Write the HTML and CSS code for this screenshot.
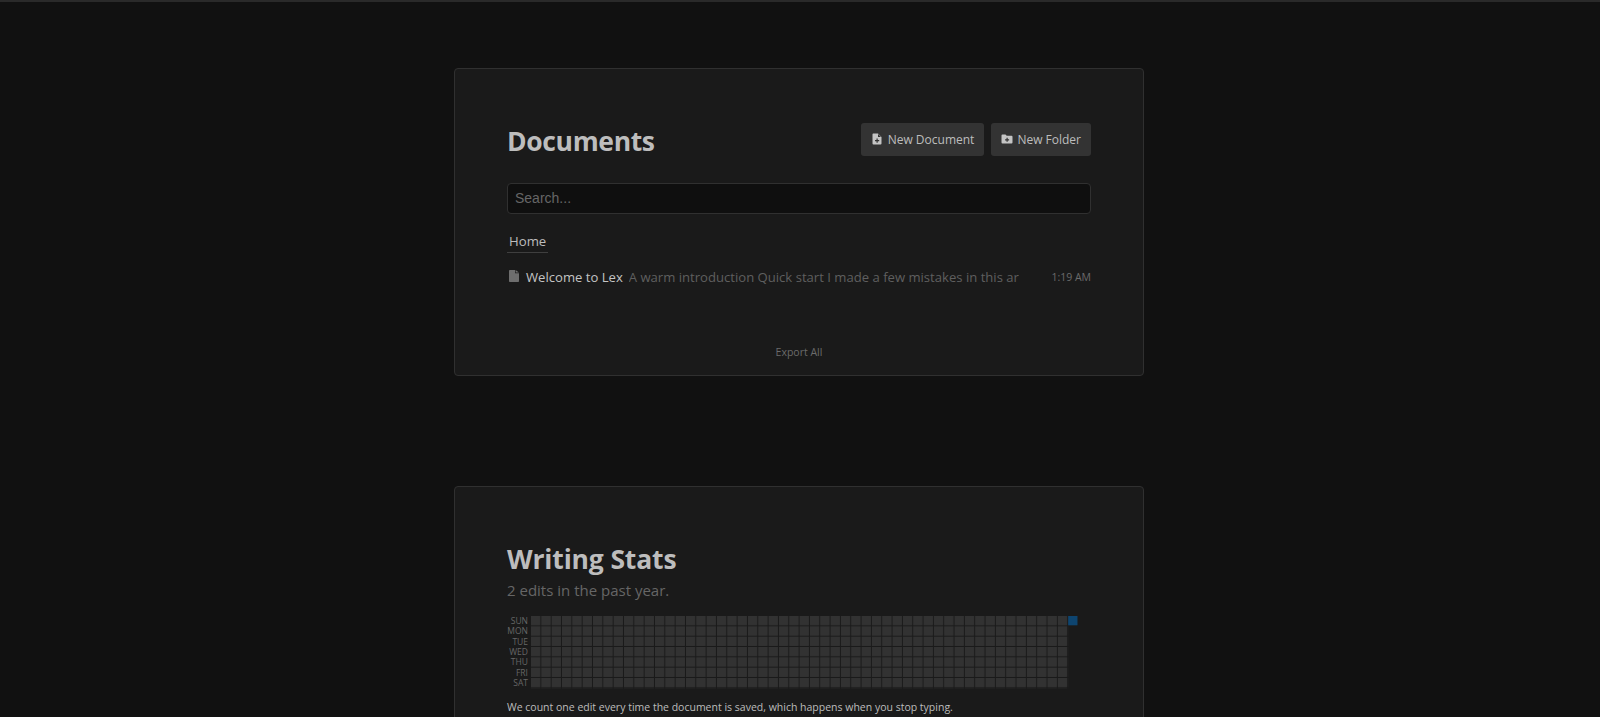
FILE: index.html
```html
<!DOCTYPE html>
<html lang="en">
<head>
<meta charset="utf-8">
<title>Lex</title>
<link rel="stylesheet" href="styles.css">
</head>
<body>
<div class="topline"></div>
<main class="page">
  <section class="card docs">
    <header class="docs-head">
      <h1 class="title title-docs">Documents</h1>
      <div class="actions">
        <button class="btn">
          <svg class="btn-icon" viewBox="0 0 12 12" width="12" height="12"><path fill="#c4c4c4" fill-rule="evenodd" d="M2 .5h5L10.500 4v6.500a1 1 0 0 1-1 1h-7a1 1 0 0 1-1-1v-9a1 1 0 0 1 .5-1zM7 1v3h3zM5.500 5.500v1.500H4v1.200h1.500v1.500h1.200V8.200h1.500V7H6.700V5.500z"/></svg>
          New Document
        </button>
        <button class="btn btn-folder">
          <svg class="btn-icon" viewBox="0 0 12 12" width="12" height="12"><path fill="#c4c4c4" fill-rule="evenodd" d="M.5 2.500a1 1 0 0 1 1-1h3l1.200 1.200h4.800a1 1 0 0 1 1 1v5.800a1 1 0 0 1-1 1h-9a1 1 0 0 1-1-1zM5.500 4.800v1.400H4.100v1.200h1.400v1.400h1.200V7.400h1.400V6.200H6.700V4.800z"/></svg>
          New Folder
        </button>
      </div>
    </header>
    <input class="search" type="text" placeholder="Search...">
    <nav class="crumbs"><span class="crumb">Home</span></nav>
    <div class="doc-row">
      <svg class="doc-icon" viewBox="0 0 10 12" width="10" height="12"><path fill="#6e6e6e" d="M.8 0h5.200v3.200h4v8a.8.8 0 0 1-.8.8H.8a.8.8 0 0 1-.8-.8V.8A.8.8 0 0 1 .8 0zM6.600 0L10 2.600H6.600z"/></svg>
      <span class="doc-name">Welcome to Lex</span>
      <span class="doc-preview">A warm introduction Quick start I made a few mistakes in this ar</span>
      <span class="doc-time">1:19 AM</span>
    </div>
    <div class="export">Export All</div>
  </section>

  <section class="card stats">
    <h2 class="title title-stats">Writing Stats</h2>
    <p class="subtitle">2 edits in the past year.</p>
    <div class="heat">
      <div class="days">
        <span>SUN</span><span>MON</span><span>TUE</span><span>WED</span><span>THU</span><span>FRI</span><span>SAT</span>
      </div>
      <svg class="heat-grid" width="548" height="72.500" viewBox="0 0 548 72.500">
        <defs>
          <pattern id="cell" width="10.330" height="10.330" patternUnits="userSpaceOnUse">
            <rect width="9.300" height="9.300" fill="#323232"/>
          </pattern>
        </defs>
        <rect width="537.160" height="72.310" fill="url(#cell)"/>
        <rect x="537.160" width="9.300" height="9.300" fill="#0e4570"/>
      </svg>
    </div>
    <p class="note">We count one edit every time the document is saved, which happens when you stop typing.</p>
  </section>
</main>
</body>
</html>
```
FILE: styles.css
```css
* { box-sizing: border-box; }
html, body { margin: 0; height: 717px; overflow: hidden; }
body { background: #111111; color: #c4c4c4; font-family: "Open Sans", "Noto Sans", sans-serif; }
.topline { height: 2px; background: #2a2a2a; }
.page { display: flex; flex-direction: column; align-items: center; padding: 66px 2px 0 0; gap: 110px; }
.card { width: 690px; background: #1a1a1a; border: 1px solid #303030; border-radius: 4px; padding: 0 52px; flex: none; }
.docs { height: 308px; padding-top: 52px; }
.stats { height: 400px; padding-top: 54px; }
.docs-head { display: flex; justify-content: space-between; align-items: center; height: 36px; }
.title { margin: 0; font-size: 26.500px; line-height: 36px; font-weight: 700; color: #bdbdbd; letter-spacing: -.35px; }
.title-docs { margin-top: 4px; }
.title-stats { letter-spacing: -.15px; }
.actions { display: flex; gap: 7px; }
.btn { display: flex; align-items: center; gap: 5px; height: 33px; padding: 0 10px; border: 0; border-radius: 3px; background: #333333; color: #bdbdbd; font: 400 12px "Open Sans", sans-serif; }
.btn-folder { gap: 4px; }
.btn-icon { flex: none; }
.search { display: block; width: 100%; height: 31px; margin-top: 26px; padding: 0 7px 2px; background: #0f0f0f; border: 1px solid #303030; border-radius: 4px; font: 400 14px "Liberation Sans", sans-serif; color: #c4c4c4; outline: 0; }
.search::placeholder { color: #666666; opacity: 1; }
.crumbs { display: flex; margin-top: 17px; }
.crumb { padding: 0 2px 1px; border-bottom: 1px solid #3f3f3f; font-size: 13.200px; line-height: 20px; color: #bdbdbd; }
.doc-row { display: flex; align-items: center; height: 20px; margin-top: 14px; font-size: 13.100px; }
.doc-icon { flex: none; margin: -3px 7px 0 2px; }
.doc-name { flex: none; color: #c4c4c4; }
.doc-preview { flex: 0 0 390px; width: 390px; margin-left: 6px; overflow: hidden; white-space: nowrap; color: #5f5f5f; }
.doc-time { margin-left: auto; font-size: 10.500px; color: #6b6b6b; }
.export { margin-top: 56px; text-align: center; font-size: 10.500px; line-height: 18px; color: #6b6b6b; }
.subtitle { margin: 1px 0 0; font-size: 15px; line-height: 24px; color: #666666; }
.heat { display: flex; margin-top: 14px; }
.days { display: flex; flex-direction: column; width: 21px; margin-right: 3px; flex: none; }
.days span { height: 10.330px; font-size: 8.500px; line-height: 10.330px; text-align: right; color: #666666; }
.heat-grid { display: block; flex: none; }
.note { margin: 9px 0 0; font-size: 10.500px; line-height: 18px; color: #bdbdbd; }
```
